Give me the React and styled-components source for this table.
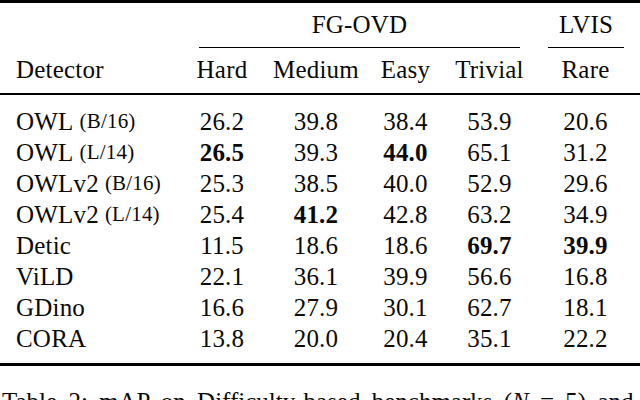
import React from 'react';
import styled, { createGlobalStyle } from 'styled-components';

const COLS = '175px 94px 94px 85px 83px 109px';
const SERIF = '"Liberation Serif", "Times New Roman", serif';

const GlobalStyle = createGlobalStyle`
  html, body { margin: 0; padding: 0; background: #fff; }
  body { font-family: ${SERIF}; }
`;

const Page = styled.div`
  width: 640px;
  height: 400px;
  overflow: hidden;
  font-family: ${SERIF};
  color: #0a0a0a;
`;

const Table = styled.div`
  display: flex;
  flex-direction: column;
  border-top: 3px solid #000;
  border-bottom: 3px solid #000;
  font-size: 25px;
  letter-spacing: 0.2px;
`;

const Row = styled.div`
  display: grid;
  grid-template-columns: ${COLS};
  height: ${p => p.$h}px;
  ${p => p.$rule && 'border-bottom: 2px solid #000;'}
`;

/* cmidrule, trimmed at both ends */
const Group = styled.div`
  grid-column: ${p => p.$col};
  margin: 0 ${p => p.$trimR}px 0 ${p => p.$trimL}px;
  display: flex;
  align-items: center;
  justify-content: center;
  border-bottom: 1.5px solid #000;
  font-family: ${SERIF};
`;

const Blank = styled.div``;

const Cell = styled.div`
  display: flex;
  align-items: center;
  justify-content: ${p => (p.$left ? 'flex-start' : 'center')};
  padding-left: ${p => (p.$left ? '16px' : '0')};
  font-family: ${SERIF};
  font-weight: ${p => (p.$bold ? 700 : 400)};
  white-space: nowrap;
`;

const Variant = styled.span`
  font-family: ${SERIF};
  font-size: 21px;
  margin-left: 6px;
`;

const Body = styled.div`
  padding: 11px 0 9px;
`;

const Caption = styled.div`
  margin-top: 21px;
  padding-left: 2px;
  font-family: ${SERIF};
  font-size: 25px;
  line-height: 1.2;
  white-space: nowrap;
  word-spacing: 5px;
`;

const rows = [
  ['OWL', '(B/16)', ['26.2', '39.8', '38.4', '53.9', '20.6']],
  ['OWL', '(L/14)', ['*26.5', '39.3', '*44.0', '65.1', '31.2']],
  ['OWLv2', '(B/16)', ['25.3', '38.5', '40.0', '52.9', '29.6']],
  ['OWLv2', '(L/14)', ['25.4', '*41.2', '42.8', '63.2', '34.9']],
  ['Detic', null, ['11.5', '18.6', '18.6', '*69.7', '*39.9']],
  ['ViLD', null, ['22.1', '36.1', '39.9', '56.6', '16.8']],
  ['GDino', null, ['16.6', '27.9', '30.1', '62.7', '18.1']],
  ['CORA', null, ['13.8', '20.0', '20.4', '35.1', '22.2']],
];

export default function App() {
  return (
    <Page>
      <GlobalStyle />
      <Table>
        <Row $h={44.5}>
          <Blank />
          <Group $col="2 / 6" $trimL={24} $trimR={11}>FG-OVD</Group>
          <Group $col="6" $trimL={17} $trimR={16}>LVIS</Group>
        </Row>
        <Row $h={45.5} $rule>
          <Cell $left>Detector</Cell>
          <Cell>Hard</Cell>
          <Cell>Medium</Cell>
          <Cell>Easy</Cell>
          <Cell>Trivial</Cell>
          <Cell>Rare</Cell>
        </Row>
        <Body>
          {rows.map(([name, variant, vals]) => (
            <Row $h={31} key={name + variant}>
              <Cell $left>
                {name}
                {variant && <Variant>{variant}</Variant>}
              </Cell>
              {vals.map((v, i) => (
                <Cell key={i} $bold={v.startsWith('*')}>{v.replace('*', '')}</Cell>
              ))}
            </Row>
          ))}
        </Body>
      </Table>
      <Caption>
        Table 2: mAP on Difficulty-based benchmarks (<i>N</i> = 5) and
      </Caption>
    </Page>
  );
}
